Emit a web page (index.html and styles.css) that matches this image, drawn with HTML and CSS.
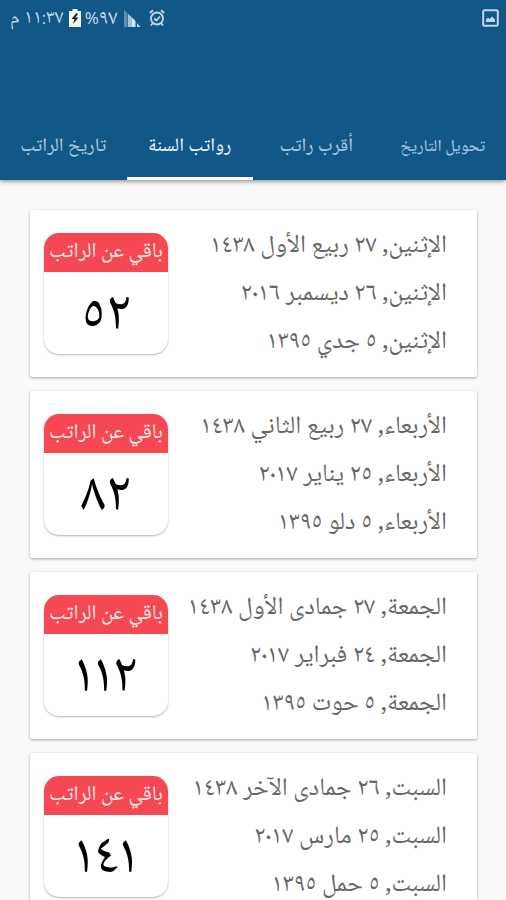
FILE: index.html
```
<!DOCTYPE html>
<html lang="ar" dir="rtl">
<head>
    <meta charset="UTF-8">
    <meta name="viewport" content="width=device-width, initial-scale=1.0">
    <title>رواتب السنة</title>
    <link rel="stylesheet" href="styles.css">
</head>
<body>
    <header class="header">
        <div class="status-bar">
            <svg class="picture-icon" width="17" height="18" viewBox="0 0 17 18">
                <rect x="1.2" y="1.2" width="14.6" height="15.6" rx="1.5" fill="none" stroke="#c3d5ee" stroke-width="2"/>
                <path d="M4 13V10.5L6 8.5L7.5 10L10 7.5L13 10.5V13Z" fill="#c3d5ee"/>
            </svg>
            <div class="status-info">
                <svg class="alarm-icon" width="16" height="18" viewBox="0 0 16 18" fill="none" stroke="#c3d5e8" stroke-width="1.8">
                    <circle cx="8" cy="9.5" r="6"/>
                    <path d="M0.8 4L4 1.2M15.2 4L12 1.2M3.8 14L2 16.5M12.2 14L14 16.5M5.2 9.5L7.3 11.5L11 7.5"/>
                </svg>
                <svg class="signal-icon" width="17" height="17" viewBox="0 0 17 17">
                    <path d="M0 0L3.5 3V17H0Z" fill="#5f8db3"/>
                    <path d="M4 4L7.5 7V17H4Z" fill="#a9c3dc"/>
                    <path d="M7.5 7L11.5 11V17H7.5Z" fill="#d5e3f2"/>
                    <path d="M13 13L16.5 17H13Z" fill="#c3d5e8"/>
                </svg>
                <span class="percent">٩٧<span class="sign">%</span></span>
                <svg class="battery-icon" width="12" height="18" viewBox="0 0 12 18">
                    <path d="M3.5 0H8.5V2H12V18H0V2H3.5Z" fill="#f3f5ee"/>
                    <path d="M7.5 4L2.5 10H5.5L4 15L9.5 8.5H6.5L9 5Z" fill="#222"/>
                </svg>
                <span class="time">١١:٣٧ م</span>
            </div>
        </div>
        <nav class="tabs">
            <a class="tab small">تحويل التاريخ</a>
            <a class="tab">أقرب راتب</a>
            <a class="tab active">رواتب السنة</a>
            <a class="tab">تاريخ الراتب</a>
        </nav>
    </header>
    <main class="list">
        <div class="card">
            <div class="dates">
                <p>الإثنين, ٢٧ ربيع الأول ١٤٣٨</p>
                <p>الإثنين, ٢٦ ديسمبر ٢<span class="zero">٠</span>١٦</p>
                <p>الإثنين, ٥ جدي ١٣٩٥</p>
            </div>
            <div class="counter">
                <div class="counter-title">باقي عن الراتب</div>
                <div class="counter-days">٥٢</div>
            </div>
        </div>
        <div class="card">
            <div class="dates">
                <p>الأربعاء, ٢٧ ربيع الثاني ١٤٣٨</p>
                <p>الأربعاء, ٢٥ يناير ٢<span class="zero">٠</span>١٧</p>
                <p>الأربعاء, ٥ دلو ١٣٩٥</p>
            </div>
            <div class="counter">
                <div class="counter-title">باقي عن الراتب</div>
                <div class="counter-days">٨٢</div>
            </div>
        </div>
        <div class="card">
            <div class="dates">
                <p>الجمعة, ٢٧ جمادى الأول ١٤٣٨</p>
                <p>الجمعة, ٢٤ فبراير ٢<span class="zero">٠</span>١٧</p>
                <p>الجمعة, ٥ حوت ١٣٩٥</p>
            </div>
            <div class="counter">
                <div class="counter-title">باقي عن الراتب</div>
                <div class="counter-days"><span class="one">١</span><span class="one">١</span>٢</div>
            </div>
        </div>
        <div class="card">
            <div class="dates">
                <p>السبت, ٢٦ جمادى الآخر ١٤٣٨</p>
                <p>السبت, ٢٥ مارس ٢<span class="zero">٠</span>١٧</p>
                <p>السبت, ٥ حمل ١٣٩٥</p>
            </div>
            <div class="counter">
                <div class="counter-title">باقي عن الراتب</div>
                <div class="counter-days"><span class="one">١</span>٤<span class="one">١</span></div>
            </div>
        </div>
    </main>
</body>
</html>
```
FILE: styles.css
```
* {
    box-sizing: border-box;
}
body {
    font-family: "Noto Naskh Arabic", "Noto Sans Arabic", "Noto Sans", serif;
    margin: 0;
    height: 900px;
    background-color: #fafafa;
    overflow: hidden;
}
.header {
    height: 180px;
    background-color: #115788;
    box-shadow: 0 1px 5px rgba(0, 0, 0, 0.5);
    display: flex;
    flex-direction: column;
    justify-content: space-between;
}
.status-bar {
    height: 36px;
    padding: 0 7px 0 10px;
    display: flex;
    justify-content: space-between;
    align-items: center;
    color: #c3d5e8;
    font-size: 19.8px;
    line-height: 36px;
    white-space: nowrap;
}
.status-info {
    display: flex;
    align-items: center;
}
.signal-icon {
    margin: 0 8px 0 6px;
}
.percent {
    font-size: 21px;
}
.percent, .time {
    padding-top: 2px;
}
.sign {
    font-family: "Noto Sans", sans-serif;
    font-size: 17px;
}
.battery-icon {
    margin: 0 4px 0 5px;
}
.tabs {
    display: flex;
    height: 68px;
}
.tab {
    flex: 1;
    text-align: center;
    color: #a6c6de;
    font-size: 19px;
    font-weight: 500;
    line-height: 70px;
    border-bottom: 3px solid transparent;
    white-space: nowrap;
}
.tab.small {
    font-size: 16.5px;
}
.tab.active {
    color: #e8f1fa;
    border-bottom-color: white;
}
.list {
    padding: 30px 29px 0 30px;
    display: flex;
    flex-direction: column;
    gap: 14.1px;
}
.card {
    height: 167px;
    flex-shrink: 0;
    background-color: white;
    border-radius: 2px;
    box-shadow: 0 1px 3px rgba(0, 0, 0, 0.35);
    padding: 12px 30px 0 14px;
    display: flex;
    justify-content: space-between;
}
.dates p {
    margin: 0;
    height: 48px;
    line-height: 49px;
    font-size: 25px;
    color: #666;
    white-space: nowrap;
}
.zero {
    margin: 0 -2.8px;
}
.counter {
    width: 124px;
    height: 121px;
    margin-top: 11px;
    border-radius: 15px;
    box-shadow: 0 1px 2px rgba(0, 0, 0, 0.3);
    overflow: hidden;
    text-align: center;
}
.counter-title {
    height: 39px;
    line-height: 39px;
    background-color: #f54852;
    color: #fff0f0;
    font-size: 21px;
    white-space: nowrap;
}
.counter-days {
    height: 82px;
    line-height: 91px;
    font-size: 56px;
    color: black;
}
.one {
    margin: 0 -3px;
}
```
